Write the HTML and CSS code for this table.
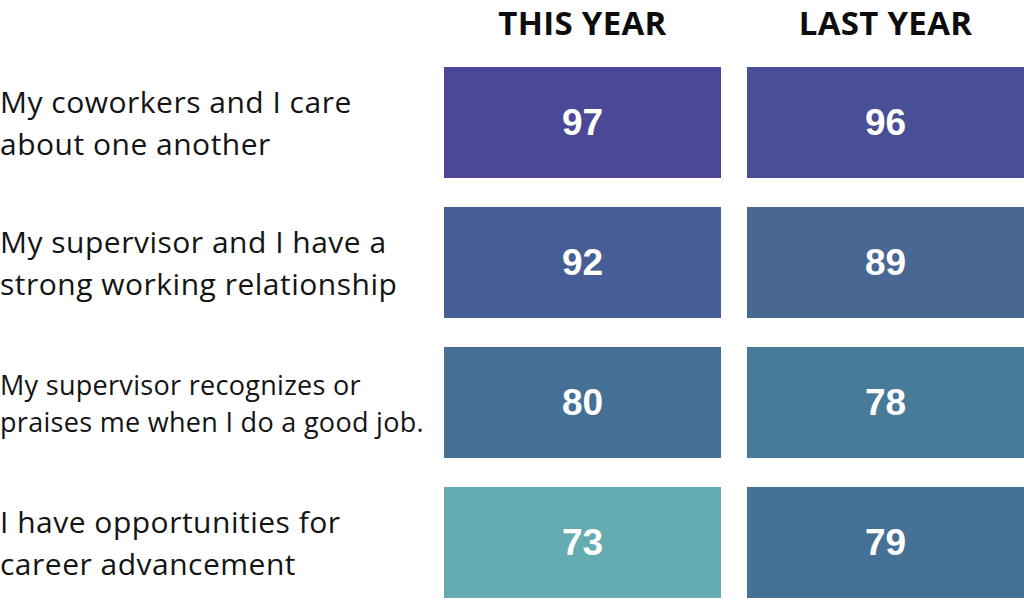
FILE: index.html
```html
<!DOCTYPE html>
<html lang="en">
<head>
<meta charset="utf-8">
<title>Survey results</title>
<link rel="stylesheet" href="styles.css">
</head>
<body>
<div class="chart">
  <div class="corner"></div>
  <div class="head">THIS YEAR</div>
  <div class="head">LAST YEAR</div>

  <div class="label">My coworkers and I care<br>about one another</div>
  <div class="cell c-97">97</div>
  <div class="cell c-96">96</div>

  <div class="label">My supervisor and I have a<br>strong working relationship</div>
  <div class="cell c-92">92</div>
  <div class="cell c-89">89</div>

  <div class="label small">My supervisor recognizes or<br>praises me when I do a good job.</div>
  <div class="cell c-80">80</div>
  <div class="cell c-78">78</div>

  <div class="label">I have opportunities for<br>career advancement</div>
  <div class="cell c-73">73</div>
  <div class="cell c-79">79</div>
</div>
</body>
</html>
```
FILE: styles.css
```css
html, body {
  margin: 0;
  padding: 0;
  background: #ffffff;
}
body {
  width: 1024px;
  height: 602px;
  overflow: hidden;
}
.chart {
  display: grid;
  grid-template-columns: 418px 277px 277px;
  grid-template-rows: 67px 140px 140px 140px 140px;
  column-gap: 26px;
}
.chart > :nth-child(n+4) {
  margin-bottom: 29px;
}
.head {
  font-family: "Open Sans", "Liberation Sans", sans-serif;
  font-weight: 700;
  font-size: 33px;
  line-height: 45px;
  color: #0d0d0d;
  text-align: center;
  letter-spacing: 0.3px;
}
.label {
  font-family: "Open Sans", "Liberation Sans", sans-serif;
  font-size: 30px;
  line-height: 42px;
  color: #141414;
  display: flex;
  align-items: center;
  letter-spacing: 0.5px;
  white-space: nowrap;
}
.label.small {
  font-size: 27px;
  line-height: 37px;
  letter-spacing: 0.3px;
}
.cell {
  display: flex;
  align-items: center;
  justify-content: center;
  color: #ffffff;
  font-family: "Liberation Sans", Arial, sans-serif;
  font-weight: 700;
  font-size: 37px;
}
.c-97 { background: #4c4898; }
.c-96 { background: #484f96; }
.c-92 { background: #465d96; }
.c-89 { background: #486893; }
.c-80 { background: #466f96; }
.c-78 { background: #487a99; }
.c-73 { background: #64acb1; }
.c-79 { background: #467197; }
```
